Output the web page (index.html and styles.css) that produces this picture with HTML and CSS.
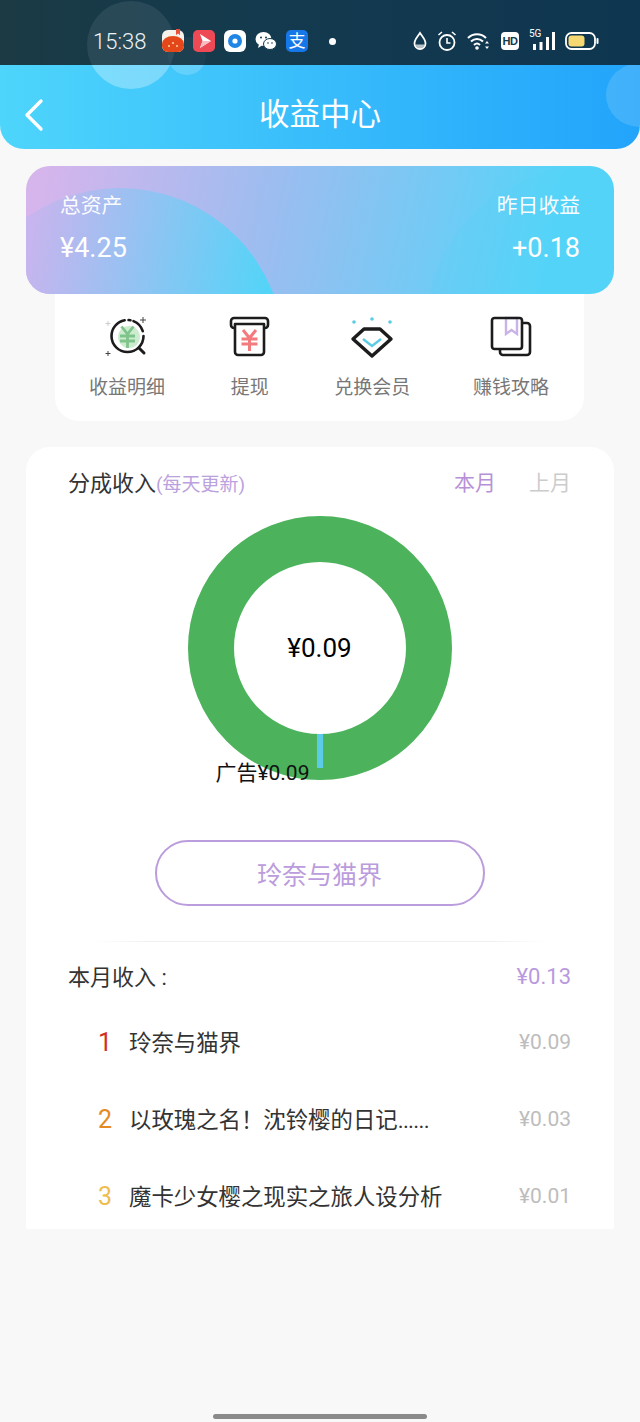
FILE: index.html
```html
<!DOCTYPE html>
<html lang="zh-CN">
  <head>
    <meta charset="UTF-8" />
    <title>收益中心</title>
    <link rel="stylesheet" href="styles.css">
  </head>
  <body>
    <div class="page">
      <div class="status-bar">
        <span class="bubble bubble-big-dark"></span>
        <span class="bubble bubble-small-dark"></span>
        <span class="time">15:38</span>
        <div class="apps">
          <svg width="22" height="24" viewBox="0 0 22 24">
            <rect x="0" y="1" width="22" height="22" rx="6" fill="#f6f1ea"/>
            <path d="M0 15a11 8 0 0 1 22 0v2a6 6 0 0 1-6 6H6a6 6 0 0 1-6-6z" fill="#e4481a"/>
            <path d="M14 0h4v6l-2-1.500-2 1.500z" fill="#e8503a"/>
            <circle cx="7" cy="17" r="1" fill="#ffd9a0"/><circle cx="11" cy="14" r="1" fill="#ffd9a0"/><circle cx="15" cy="17" r="1" fill="#ffd9a0"/>
          </svg>
          <svg width="22" height="24" viewBox="0 0 22 24">
            <rect x="0" y="1" width="22" height="22" rx="5" fill="#ee4a55"/>
            <path d="M7 5l11 7-11 7 2.500-7z" fill="#fff"/>
            <path d="M9.500 12L18 12 7 19z" fill="#f9bcc0"/>
          </svg>
          <svg width="22" height="24" viewBox="0 0 22 24">
            <rect x="0" y="1" width="22" height="22" rx="6" fill="#fff"/>
            <circle cx="11" cy="12" r="7" fill="#1f86e5"/>
            <circle cx="11" cy="12" r="2.600" fill="#fff"/>
          </svg>
          <svg width="22" height="24" viewBox="0 0 22 24">
            <ellipse cx="8.500" cy="10" rx="8" ry="7" fill="#fff"/>
            <path d="M4 15l-1 4 4-2.500z" fill="#fff"/>
            <ellipse cx="15" cy="15" rx="6.500" ry="5.500" fill="#fff" stroke="#143a4d"/>
            <circle cx="6" cy="8.500" r="1" fill="#143a4d"/><circle cx="11" cy="8.500" r="1" fill="#143a4d"/>
            <circle cx="13" cy="14" r=".8" fill="#143a4d"/><circle cx="17" cy="14" r=".8" fill="#143a4d"/>
          </svg>
          <span class="alipay">支</span>
        </div>
        <span class="dot"></span>
        <div class="sys-icons">
          <svg width="14" height="20" viewBox="0 0 14 20">
            <path d="M7 2C4.500 6 1.500 8.500 1.500 12.500a5.500 5.500 0 0 0 11 0C12.500 8.500 9.500 6 7 2z" fill="none" stroke="#fff" stroke-width="1.800"/>
            <path d="M2.500 13.500h9a4.600 4.600 0 0 1-9 0z" fill="#b9c4c9"/>
          </svg>
          <svg width="20" height="22" viewBox="0 0 20 22">
            <circle cx="10" cy="12.500" r="7.500" fill="none" stroke="#fff" stroke-width="1.800"/>
            <path d="M10 8v5h3.500" fill="none" stroke="#fff" stroke-width="1.600"/>
            <path d="M1.500 5l3.500-3M18.500 5L15 2" stroke="#fff" stroke-width="1.600"/>
          </svg>
          <svg width="24" height="20" viewBox="0 0 24 20">
            <path d="M1 7c5-5 13-5 18 0M4 10.500c3.500-3.500 8.500-3.500 12 0M7 14c2-2 4-2 6 0" fill="none" stroke="#fff" stroke-width="2"/>
            <circle cx="10" cy="17" r="1.800" fill="#fff"/>
            <path d="M20 10l2 2.500h-4zM20 18l2-2.500h-4z" fill="#fff"/>
          </svg>
          <span class="hd">HD</span>
          <div class="signal">
            <span class="five-g">5G</span>
            <svg width="26" height="20" viewBox="0 0 26 20">
              <rect x="4" y="13" width="3" height="6" fill="#fff"/>
              <rect x="10.500" y="11" width="3" height="8" fill="#fff"/>
              <rect x="17" y="6" width="3" height="13" fill="#fff"/>
              <rect x="23" y="1" width="3" height="18" fill="#fff"/>
            </svg>
          </div>
          <svg width="34" height="20" viewBox="0 0 34 20">
            <rect x="1" y="2" width="29" height="16" rx="5.500" fill="none" stroke="#fff" stroke-width="1.800"/>
            <rect x="3.500" y="4.500" width="16" height="11" rx="3" fill="#f5d871"/>
            <rect x="31.500" y="7" width="2" height="6" rx="1" fill="#fff"/>
          </svg>
        </div>
      </div>

      <header class="top-bar">
        <span class="bubble bubble-big"></span>
        <span class="bubble bubble-small"></span>
        <span class="bubble bubble-right"></span>
        <div class="back">
          <svg width="20" height="34" viewBox="0 0 20 34">
            <path d="M17 3L3 17l14 14" fill="none" stroke="#fff" stroke-width="3.400" stroke-linecap="round" stroke-linejoin="round"/>
          </svg>
        </div>
        <h1 class="title">收益中心</h1>
      </header>

      <section class="hero">
        <span class="hero-arc-left"></span>
        <span class="hero-arc-right"></span>
        <div class="hero-col">
          <span class="hero-label">总资产</span>
          <span class="hero-value">¥4.25</span>
        </div>
        <div class="hero-col hero-col-right">
          <span class="hero-label">昨日收益</span>
          <span class="hero-value">+0.18</span>
        </div>
      </section>

      <nav class="menu">
        <div class="menu-item">
          <svg width="44" height="44" viewBox="0 0 44 44">
            <circle cx="24" cy="22" r="11" fill="#cdeccf"/>
            <path d="M16.500 11.500L22.500 19l6-7.500M15 21h15M15 26h15M22.500 19v14" fill="none" stroke="#7fc48a" stroke-width="2.800"/>
            <circle cx="22.500" cy="21" r="16" fill="none" stroke="#1c1c1c" stroke-width="2.600" stroke-dasharray="72 4 2 3 14 5" stroke-linecap="round"/>
            <path d="M34 33l5 5" stroke="#1c1c1c" stroke-width="3" stroke-linecap="round"/>
            <path d="M38 2v6M35 5h6" stroke="#444" stroke-width="1"/>
            <path d="M3 36v5M.5 38.500h5" stroke="#444" stroke-width="1"/>
            <path d="M3 6v5M.5 8.500h5" stroke="#ccc" stroke-width="1"/>
          </svg>
          <span class="menu-label">收益明细</span>
        </div>
        <div class="menu-item">
          <svg width="44" height="44" viewBox="0 0 44 44">
            <path d="M7 13H6a3 3 0 0 1-3-3V6a3 3 0 0 1 3-3h31a3 3 0 0 1 3 3v4a3 3 0 0 1-3 3h-1" fill="none" stroke="#1c1c1c" stroke-width="2.600"/>
            <path d="M7 9h29v28a3 3 0 0 1-3 3H10a3 3 0 0 1-3-3z" fill="#fff" stroke="#1c1c1c" stroke-width="2.600" stroke-linejoin="round"/>
            <path d="M15 15l6.500 8 6.500-8M13.500 24h16M13.500 29h16M21.500 23v13" fill="none" stroke="#f47b7d" stroke-width="3"/>
          </svg>
          <span class="menu-label">提现</span>
        </div>
        <div class="menu-item">
          <svg width="44" height="44" viewBox="0 0 44 44">
            <circle cx="4" cy="7" r="1.800" fill="#5ccbe4"/><circle cx="22" cy="4" r="1.800" fill="#5ccbe4"/><circle cx="40" cy="7" r="1.800" fill="#5ccbe4"/>
            <path d="M14 14h16l11 10-19 17L3 24z" fill="none" stroke="#1c1c1c" stroke-width="3.400" stroke-linejoin="round"/>
            <path d="M13 24l9 7 9-7" fill="none" stroke="#5ccbe4" stroke-width="2.400"/>
          </svg>
          <span class="menu-label">兑换会员</span>
        </div>
        <div class="menu-item">
          <svg width="44" height="44" viewBox="0 0 44 44">
            <path d="M34 8h4a3 3 0 0 1 3 3v26a3 3 0 0 1-3 3H14a3 3 0 0 1-3-3v-3" fill="none" stroke="#1c1c1c" stroke-width="2.600"/>
            <path d="M17 3h11v16l-5.500-4-5.500 4z" fill="none" stroke="#c9b4e8" stroke-width="2.400"/>
            <rect x="3" y="3" width="30" height="31" rx="2.500" fill="none" stroke="#1c1c1c" stroke-width="2.600"/>
          </svg>
          <span class="menu-label">赚钱攻略</span>
        </div>
      </nav>

      <main class="card">
        <div class="card-head">
          <div class="card-title">分成收入<span class="card-note">(每天更新)</span></div>
          <div class="tabs">
            <span class="tab tab-active">本月</span>
            <span class="tab">上月</span>
          </div>
        </div>

        <div class="chart">
          <svg width="264" height="264" viewBox="0 0 264 264">
            <circle cx="132" cy="132" r="109" fill="none" stroke="#4cb35c" stroke-width="46"/>
            <rect x="129" y="218" width="6" height="34" fill="#5ccbe8"/>
          </svg>
          <span class="chart-total">¥0.09</span>
          <span class="chart-label">广告¥0.09</span>
        </div>

        <button class="work-btn">玲奈与猫界</button>
        <div class="divider"></div>

        <div class="income-head">
          <span class="income-label">本月收入 :</span>
          <span class="income-total">¥0.13</span>
        </div>

        <ul class="rank-list">
          <li class="rank-row">
            <span class="rank rank-1">1</span>
            <span class="rank-name">玲奈与猫界</span>
            <span class="rank-money">¥0.09</span>
          </li>
          <li class="rank-row">
            <span class="rank rank-2">2</span>
            <span class="rank-name">以玫瑰之名！沈铃樱的日记<span class="dots">......</span></span>
            <span class="rank-money">¥0.03</span>
          </li>
          <li class="rank-row">
            <span class="rank rank-3">3</span>
            <span class="rank-name">魔卡少女樱之现实之旅人设分析</span>
            <span class="rank-money">¥0.01</span>
          </li>
        </ul>
      </main>

      <div class="home-bar"></div>
    </div>
  </body>
</html>
```

FILE: styles.css
```css
* {
  box-sizing: border-box;
}
body {
  margin: 0;
  font-family: Roboto, "Noto Sans CJK SC", sans-serif;
  background-color: #f8f8f8;
}
.page {
  display: flex;
  flex-direction: column;
  height: 1422px;
  overflow: hidden;
}

/* status bar */
.status-bar {
  position: relative;
  display: flex;
  align-items: center;
  height: 65px;
  padding: 17px 41px 0 93px;
  overflow: hidden;
  background: linear-gradient(90deg, #1b3a44, #133a4e 40%, #0f3650);
  color: #eef3f3;
}
.status-bar > *:not(.bubble) {
  position: relative;
}
.time {
  width: 53px;
  font-size: 22px;
  font-weight: 300;
}
.apps {
  display: flex;
  align-items: center;
  gap: 9px;
  margin-left: 16px;
}
.alipay {
  display: flex;
  align-items: center;
  justify-content: center;
  width: 22px;
  height: 22px;
  border-radius: 5px;
  background-color: #1677e8;
  color: #fff;
  font-size: 17px;
  line-height: 1;
}
.dot {
  width: 7px;
  height: 7px;
  margin-left: 21px;
  border-radius: 50%;
  background-color: #fff;
}
.sys-icons {
  display: flex;
  align-items: center;
  gap: 10px;
  margin-left: auto;
}
.hd {
  width: 18px;
  height: 18px;
  border-radius: 4px;
  background-color: #fff;
  color: #123a4e;
  font-family: "Liberation Sans", sans-serif;
  font-size: 11px;
  font-weight: 700;
  line-height: 18px;
  text-align: center;
  letter-spacing: -0.5px;
}
.signal {
  position: relative;
  width: 26px;
  height: 20px;
}
.five-g {
  position: absolute;
  top: -3px;
  left: 0;
  color: #fff;
  font-size: 10px;
  line-height: 12px;
}

/* header */
.top-bar {
  position: relative;
  display: grid;
  grid-template-columns: 1fr auto 1fr;
  align-items: center;
  height: 84px;
  padding-top: 16px;
  overflow: hidden;
  border-radius: 0 0 24px 24px;
  background: linear-gradient(90deg, #4ed5fb, #22a4fb);
}
.back {
  position: relative;
  display: flex;
  padding-left: 24px;
}
.title {
  position: relative;
  margin: 0;
  color: #fff;
  font-size: 30.5px;
  font-weight: 400;
  line-height: 40px;
}
.bubble {
  position: absolute;
  border-radius: 50%;
}
.bubble-big-dark {
  top: 1px;
  left: 87px;
  width: 88px;
  height: 88px;
  background-color: rgba(255, 255, 255, 0.08);
}
.bubble-small-dark {
  top: 37px;
  left: 168px;
  width: 38px;
  height: 38px;
  background-color: rgba(255, 255, 255, 0.03);
}
.bubble-big {
  top: -64px;
  left: 87px;
  width: 88px;
  height: 88px;
  background-color: rgba(255, 255, 255, 0.3);
}
.bubble-small {
  top: -28px;
  left: 168px;
  width: 38px;
  height: 38px;
  background-color: rgba(255, 255, 255, 0.18);
}
.bubble-right {
  top: -2px;
  left: 606px;
  width: 68px;
  height: 64px;
  background-color: rgba(255, 255, 255, 0.14);
}

/* assets card */
.hero {
  position: relative;
  display: flex;
  justify-content: space-between;
  height: 128px;
  margin: 17px 26px 0;
  padding: 26px 34px 0;
  overflow: hidden;
  border-radius: 24px;
  background: linear-gradient(102deg, #d5b5ec 3%, #9bbdf0 42%, #55d4f8 88%);
  color: #fff;
}
.hero-arc-left {
  position: absolute;
  top: 22px;
  left: -70px;
  width: 328px;
  height: 328px;
  border-radius: 50%;
  background: linear-gradient(100deg, #c6b5ee 22%, #4fd5f8 88%);
}
.hero-arc-right {
  position: absolute;
  top: 2px;
  left: 400px;
  width: 320px;
  height: 320px;
  border-radius: 50%;
  background-color: rgba(85, 212, 248, 0.18);
}
.hero-col {
  position: relative;
  display: flex;
  flex-direction: column;
  gap: 11px;
}
.hero-col-right {
  align-items: flex-end;
}
.hero-label {
  font-size: 20.8px;
  line-height: 28px;
  opacity: 0.95;
}
.hero-value {
  font-size: 27px;
  line-height: 34px;
}

/* shortcuts */
.menu {
  display: flex;
  justify-content: space-between;
  margin: 0 56px 0 55px;
  padding: 21px 35px 20px 34px;
  border-radius: 0 0 24px 24px;
  background-color: #fff;
}
.menu-item {
  display: flex;
  flex-direction: column;
  align-items: center;
}
.menu-label {
  margin-top: 16px;
  color: #777;
  font-size: 19px;
  line-height: 26px;
  white-space: nowrap;
}

/* income card */
.card {
  margin: 26px 26px 0;
  padding: 22px 43px 18px 42px;
  border-radius: 24px 24px 0 0;
  background-color: #fff;
}
.card-head {
  display: flex;
  justify-content: space-between;
  align-items: center;
  height: 30px;
}
.card-title {
  color: #333;
  font-size: 22px;
  line-height: 30px;
}
.card-note {
  color: #bba2de;
  font-size: 19px;
}
.tabs {
  display: flex;
  gap: 33px;
  margin-top: -2px;
}
.tab {
  color: #ccc;
  font-size: 21px;
  line-height: 28px;
}
.tab-active {
  color: #b890d8;
}
.chart {
  position: relative;
  width: 264px;
  height: 264px;
  margin: 17px auto 0;
}
.chart svg {
  display: block;
}
.chart-total {
  position: absolute;
  top: 0;
  left: 0;
  display: flex;
  align-items: center;
  justify-content: center;
  width: 264px;
  height: 264px;
  color: #000;
  font-size: 26px;
}
.chart-label {
  position: absolute;
  top: 245px;
  left: 28px;
  color: #111;
  font-size: 21px;
  line-height: 24px;
  white-space: nowrap;
}
.work-btn {
  display: block;
  width: 330px;
  height: 66px;
  margin: 60px auto 0;
  border: 2px solid #bb9cdc;
  border-radius: 33px;
  background-color: #fff;
  color: #bb9cdc;
  font-family: inherit;
  font-size: 25px;
}
.divider {
  height: 1px;
  margin: 35px 26px 0;
  background: linear-gradient(90deg, #fff, #f0f0f0 12%, #f0f0f0 88%, #fff);
}
.income-head {
  display: flex;
  justify-content: space-between;
  align-items: center;
  height: 30px;
  margin-top: 19px;
  color: #333;
  font-size: 22px;
}
.income-label {
  padding-bottom: 3px;
}
.income-total {
  color: #b99ade;
}
.rank-list {
  display: flex;
  flex-direction: column;
  gap: 47px;
  margin: 36px 0 0;
  padding: 0 0 0 30px;
  list-style: none;
}
.rank-row {
  display: flex;
  align-items: center;
  height: 30px;
}
.rank {
  width: 31px;
  font-size: 25px;
}
.rank-1 {
  color: #d0301c;
}
.rank-2 {
  color: #e58a1e;
}
.rank-3 {
  color: #efbc4e;
}
.rank-name {
  flex: 1;
  padding-bottom: 2px;
  color: #333;
  font-size: 22.4px;
}
.dots {
  letter-spacing: -0.7px;
}
.rank-money {
  color: #bdbdbd;
  font-size: 21px;
}

.home-bar {
  width: 214px;
  height: 5px;
  margin: auto auto 3px;
  border-radius: 3px;
  background-color: #8a8a8a;
}
```
